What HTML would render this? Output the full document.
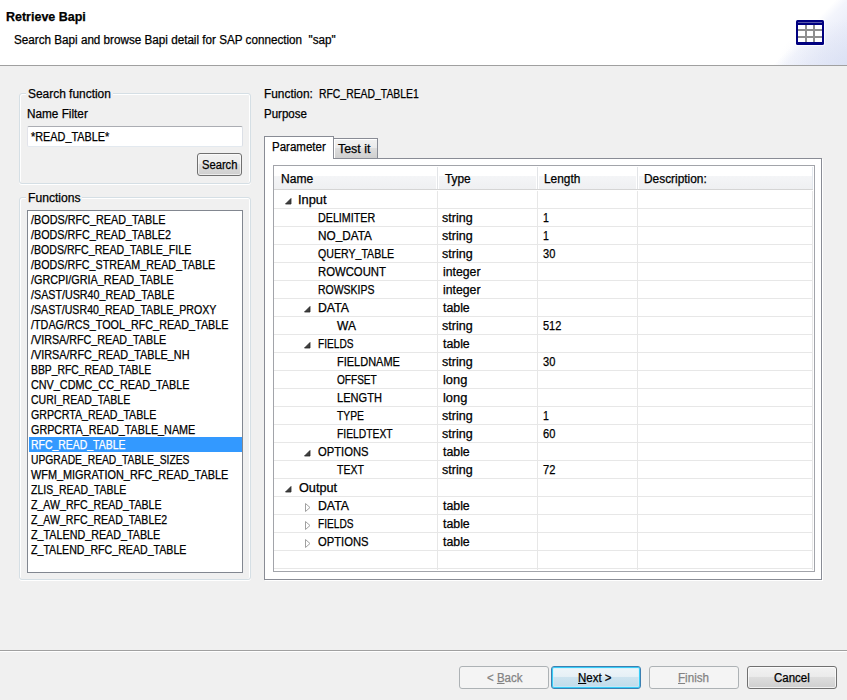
<!DOCTYPE html>
<html><head><meta charset="utf-8"><style>
html,body{margin:0;padding:0}
body{width:847px;height:700px;position:relative;overflow:hidden;background:#f0f0f0;font-family:"Liberation Sans",sans-serif;font-size:12px}
.t{position:absolute;white-space:pre;line-height:14px;transform-origin:0 0;font-size:12px;-webkit-text-stroke:0.25px currentColor}
u{text-decoration:underline;text-underline-offset:1px}
.us{position:relative;top:-1px}
</style></head><body>
<div style="position:absolute;left:0px;top:0px;width:847px;height:65px;background:#fff"></div>
<div style="position:absolute;left:600px;top:0px;width:247px;height:65px;background:radial-gradient(ellipse 70px 45px at 247px 65px, rgba(214,221,242,0.5) 0%, rgba(255,255,255,0) 100%), linear-gradient(134deg, rgba(255,255,255,0) 0%, rgba(255,255,255,0) 76%, #f3f5fc 80%, #eaedf9 88%, #e0e5f6 100%)"></div>
<div style="position:absolute;left:0px;top:65px;width:847px;height:1px;background:#a0a0a0"></div>
<div class="t" style="left:6.3px;top:10px;color:#000;font-weight:bold;transform:scaleX(1.0404);">Retrieve Bapi</div>
<div class="t" style="left:13.7px;top:33px;color:#000;transform:scaleX(0.9734);">Search Bapi and browse Bapi detail for SAP connection  &quot;sap&quot;</div>
<svg style="position:absolute;left:795px;top:19px" width="30" height="27" viewBox="0 0 30 27">
<rect x="0" y="0" width="30" height="27" rx="2" fill="#fff" opacity="0.8"/>
<rect x="1" y="1" width="28" height="25" rx="1.5" fill="#000080"/>
<rect x="3" y="6" width="24" height="17" fill="#fff"/>
<rect x="3" y="3" width="24" height="1" fill="#5a5aa8"/>
<rect x="10" y="6" width="2" height="17" fill="#8f8f8f"/>
<rect x="18" y="6" width="2" height="17" fill="#8f8f8f"/>
<rect x="3" y="10" width="24" height="2" fill="#8f8f8f"/>
<rect x="3" y="17" width="24" height="2" fill="#8f8f8f"/>
</svg>
<div style="position:absolute;left:19px;top:93px;width:232px;height:91px;box-sizing:border-box;border:1px solid #d5dfe5;border-radius:3px;box-shadow:inset 1px 1px 0 #fff, inset -1px 0 0 #fff, 0 1px 0 #fff;"></div>
<div style="position:absolute;left:26px;top:92px;width:87px;height:4px;background:#f0f0f0"></div>
<div class="t" style="left:27.7px;top:87px;color:#000;transform:scaleX(0.9940);">Search function</div>
<div class="t" style="left:27.3px;top:107px;color:#000;transform:scaleX(0.9806);">Name Filter</div>
<div style="position:absolute;left:27px;top:126px;width:216px;height:21px;box-sizing:border-box;background:#fff;border:1px solid #e3e9ef;border-top-color:#abadb3;border-left-color:#e2e3ea;border-right-color:#dbdfe6;border-radius:2px"></div>
<div class="t" style="left:31.1px;top:130px;color:#000;transform:scaleX(0.9052);">*READ<span class="us">_</span>TABLE*</div>
<div style="position:absolute;left:197px;top:153px;width:45px;height:23px;box-sizing:border-box;border:1px solid #707070;border-radius:3px;background:linear-gradient(#f2f2f2 0%,#ebebeb 45%,#dddddd 50%,#cfcfcf 100%);box-shadow:inset 0 0 0 1px rgba(255,255,255,0.6)"></div>
<div class="t" style="left:201.5px;top:158px;color:#000;transform:scaleX(0.9316);">Search</div>
<div style="position:absolute;left:19px;top:197px;width:232px;height:383px;box-sizing:border-box;border:1px solid #d5dfe5;border-radius:3px;box-shadow:inset 1px 1px 0 #fff, inset -1px 0 0 #fff, 0 1px 0 #fff;"></div>
<div style="position:absolute;left:26px;top:196px;width:56px;height:4px;background:#f0f0f0"></div>
<div class="t" style="left:27.8px;top:191px;color:#000;transform:scaleX(1.0115);">Functions</div>
<div style="position:absolute;left:27px;top:210px;width:216px;height:363px;box-sizing:border-box;background:#fff;border:1px solid #828790"></div>
<div class="t" style="left:30.7px;top:213px;color:#000;transform:scaleX(0.9015);">/BODS/RFC<span class="us">_</span>READ<span class="us">_</span>TABLE</div>
<div class="t" style="left:30.7px;top:228px;color:#000;transform:scaleX(0.8986);">/BODS/RFC<span class="us">_</span>READ<span class="us">_</span>TABLE2</div>
<div class="t" style="left:30.7px;top:243px;color:#000;transform:scaleX(0.8841);">/BODS/RFC<span class="us">_</span>READ<span class="us">_</span>TABLE<span class="us">_</span>FILE</div>
<div class="t" style="left:30.7px;top:258px;color:#000;transform:scaleX(0.8950);">/BODS/RFC<span class="us">_</span>STREAM<span class="us">_</span>READ<span class="us">_</span>TABLE</div>
<div class="t" style="left:30.7px;top:273px;color:#000;transform:scaleX(0.9030);">/GRCPI/GRIA<span class="us">_</span>READ<span class="us">_</span>TABLE</div>
<div class="t" style="left:30.7px;top:288px;color:#000;transform:scaleX(0.8935);">/SAST/USR40<span class="us">_</span>READ<span class="us">_</span>TABLE</div>
<div class="t" style="left:30.7px;top:303px;color:#000;transform:scaleX(0.8862);">/SAST/USR40<span class="us">_</span>READ<span class="us">_</span>TABLE<span class="us">_</span>PROXY</div>
<div class="t" style="left:30.7px;top:318px;color:#000;transform:scaleX(0.8989);">/TDAG/RCS<span class="us">_</span>TOOL<span class="us">_</span>RFC<span class="us">_</span>READ<span class="us">_</span>TABLE</div>
<div class="t" style="left:30.7px;top:333px;color:#000;transform:scaleX(0.8948);">/VIRSA/RFC<span class="us">_</span>READ<span class="us">_</span>TABLE</div>
<div class="t" style="left:30.7px;top:348px;color:#000;transform:scaleX(0.9047);">/VIRSA/RFC<span class="us">_</span>READ<span class="us">_</span>TABLE<span class="us">_</span>NH</div>
<div class="t" style="left:30.8px;top:363px;color:#000;transform:scaleX(0.8628);">BBP<span class="us">_</span>RFC<span class="us">_</span>READ<span class="us">_</span>TABLE</div>
<div class="t" style="left:30.8px;top:378px;color:#000;transform:scaleX(0.9010);">CNV<span class="us">_</span>CDMC<span class="us">_</span>CC<span class="us">_</span>READ<span class="us">_</span>TABLE</div>
<div class="t" style="left:30.8px;top:393px;color:#000;transform:scaleX(0.8762);">CURI<span class="us">_</span>READ<span class="us">_</span>TABLE</div>
<div class="t" style="left:30.8px;top:408px;color:#000;transform:scaleX(0.8861);">GRPCRTA<span class="us">_</span>READ<span class="us">_</span>TABLE</div>
<div class="t" style="left:30.8px;top:423px;color:#000;transform:scaleX(0.8987);">GRPCRTA<span class="us">_</span>READ<span class="us">_</span>TABLE<span class="us">_</span>NAME</div>
<div style="position:absolute;left:29px;top:437px;width:213px;height:15px;background:#3399ff"></div>
<div class="t" style="left:30.8px;top:438px;color:#fff;transform:scaleX(0.8700);">RFC<span class="us">_</span>READ<span class="us">_</span>TABLE</div>
<div class="t" style="left:30.8px;top:453px;color:#000;transform:scaleX(0.8585);">UPGRADE<span class="us">_</span>READ<span class="us">_</span>TABLE<span class="us">_</span>SIZES</div>
<div class="t" style="left:30.8px;top:468px;color:#000;transform:scaleX(0.9062);">WFM<span class="us">_</span>MIGRATION<span class="us">_</span>RFC<span class="us">_</span>READ<span class="us">_</span>TABLE</div>
<div class="t" style="left:30.8px;top:483px;color:#000;transform:scaleX(0.8727);">ZLIS<span class="us">_</span>READ<span class="us">_</span>TABLE</div>
<div class="t" style="left:30.8px;top:498px;color:#000;transform:scaleX(0.8811);">Z<span class="us">_</span>AW<span class="us">_</span>RFC<span class="us">_</span>READ<span class="us">_</span>TABLE</div>
<div class="t" style="left:30.8px;top:513px;color:#000;transform:scaleX(0.8798);">Z<span class="us">_</span>AW<span class="us">_</span>RFC<span class="us">_</span>READ<span class="us">_</span>TABLE2</div>
<div class="t" style="left:30.8px;top:528px;color:#000;transform:scaleX(0.8954);">Z<span class="us">_</span>TALEND<span class="us">_</span>READ<span class="us">_</span>TABLE</div>
<div class="t" style="left:30.8px;top:543px;color:#000;transform:scaleX(0.8844);">Z<span class="us">_</span>TALEND<span class="us">_</span>RFC<span class="us">_</span>READ<span class="us">_</span>TABLE</div>
<div class="t" style="left:264.2px;top:87px;color:#000;transform:scaleX(0.9899);">Function:</div>
<div class="t" style="left:319.0px;top:87px;color:#000;transform:scaleX(0.8662);">RFC<span class="us">_</span>READ<span class="us">_</span>TABLE1</div>
<div class="t" style="left:264.2px;top:107px;color:#000;transform:scaleX(0.9597);">Purpose</div>
<div style="position:absolute;left:264px;top:158px;width:558px;height:422px;box-sizing:border-box;background:#fff;border:1px solid #898c95;box-shadow:1px 1px 0 #fff"></div>
<div style="position:absolute;left:333px;top:138px;width:45px;height:20px;box-sizing:border-box;border:1px solid #898c95;border-bottom:none;background:linear-gradient(#f2f2f2 0%,#ebebeb 45%,#dddddd 50%,#cfcfcf 100%);box-shadow:inset 1px 1px 0 #fff"></div>
<div style="position:absolute;left:264px;top:136px;width:70px;height:23px;box-sizing:border-box;border:1px solid #898c95;border-bottom:none;background:#fff"></div>
<div class="t" style="left:272.1px;top:140px;color:#000;transform:scaleX(0.9607);">Parameter</div>
<div class="t" style="left:338.1px;top:142px;color:#000;transform:scaleX(1.0319);">Test it</div>
<div style="position:absolute;left:273px;top:165px;width:542px;height:407px;box-sizing:border-box;background:#fff;border:1px solid #a2a4aa"></div>
<div style="position:absolute;left:274px;top:166px;width:538px;height:23px;background:linear-gradient(#ffffff 0%,#ffffff 43.4%,#f4f5f7 43.5%,#eff0f2 100%)"></div>
<div style="position:absolute;left:274px;top:189px;width:539px;height:1px;background:#d5d5d5"></div>
<div style="position:absolute;left:812px;top:167px;width:1px;height:22px;background:#e3e8ee"></div>
<div style="position:absolute;left:437px;top:167px;width:1px;height:22px;background:#e2e4e7"></div>
<div style="position:absolute;left:436px;top:167px;width:1px;height:22px;background:#fff"></div>
<div style="position:absolute;left:438px;top:167px;width:1px;height:22px;background:#fff"></div>
<div style="position:absolute;left:537px;top:167px;width:1px;height:22px;background:#e2e4e7"></div>
<div style="position:absolute;left:536px;top:167px;width:1px;height:22px;background:#fff"></div>
<div style="position:absolute;left:538px;top:167px;width:1px;height:22px;background:#fff"></div>
<div style="position:absolute;left:637px;top:167px;width:1px;height:22px;background:#e2e4e7"></div>
<div style="position:absolute;left:636px;top:167px;width:1px;height:22px;background:#fff"></div>
<div style="position:absolute;left:638px;top:167px;width:1px;height:22px;background:#fff"></div>
<div class="t" style="left:281.1px;top:172px;color:#000;transform:scaleX(1.0031);">Name</div>
<div class="t" style="left:444.5px;top:172px;color:#000;transform:scaleX(0.9885);">Type</div>
<div class="t" style="left:544.2px;top:172px;color:#000;transform:scaleX(0.9891);">Length</div>
<div class="t" style="left:644.1px;top:172px;color:#000;transform:scaleX(0.9905);">Description:</div>
<div style="position:absolute;left:274px;top:208px;width:539px;height:1px;background:#e7e7e7"></div>
<div style="position:absolute;left:274px;top:226px;width:539px;height:1px;background:#e7e7e7"></div>
<div style="position:absolute;left:274px;top:244px;width:539px;height:1px;background:#e7e7e7"></div>
<div style="position:absolute;left:274px;top:262px;width:539px;height:1px;background:#e7e7e7"></div>
<div style="position:absolute;left:274px;top:280px;width:539px;height:1px;background:#e7e7e7"></div>
<div style="position:absolute;left:274px;top:298px;width:539px;height:1px;background:#e7e7e7"></div>
<div style="position:absolute;left:274px;top:316px;width:539px;height:1px;background:#e7e7e7"></div>
<div style="position:absolute;left:274px;top:334px;width:539px;height:1px;background:#e7e7e7"></div>
<div style="position:absolute;left:274px;top:352px;width:539px;height:1px;background:#e7e7e7"></div>
<div style="position:absolute;left:274px;top:370px;width:539px;height:1px;background:#e7e7e7"></div>
<div style="position:absolute;left:274px;top:388px;width:539px;height:1px;background:#e7e7e7"></div>
<div style="position:absolute;left:274px;top:406px;width:539px;height:1px;background:#e7e7e7"></div>
<div style="position:absolute;left:274px;top:424px;width:539px;height:1px;background:#e7e7e7"></div>
<div style="position:absolute;left:274px;top:442px;width:539px;height:1px;background:#e7e7e7"></div>
<div style="position:absolute;left:274px;top:460px;width:539px;height:1px;background:#e7e7e7"></div>
<div style="position:absolute;left:274px;top:478px;width:539px;height:1px;background:#e7e7e7"></div>
<div style="position:absolute;left:274px;top:496px;width:539px;height:1px;background:#e7e7e7"></div>
<div style="position:absolute;left:274px;top:514px;width:539px;height:1px;background:#e7e7e7"></div>
<div style="position:absolute;left:274px;top:532px;width:539px;height:1px;background:#e7e7e7"></div>
<div style="position:absolute;left:274px;top:550px;width:539px;height:1px;background:#e7e7e7"></div>
<div style="position:absolute;left:274px;top:568px;width:539px;height:1px;background:#e7e7e7"></div>
<div style="position:absolute;left:437px;top:191px;width:1px;height:379px;background:#e7e7e7"></div>
<div style="position:absolute;left:537px;top:191px;width:1px;height:379px;background:#e7e7e7"></div>
<div style="position:absolute;left:637px;top:191px;width:1px;height:379px;background:#e7e7e7"></div>
<div style="position:absolute;left:812px;top:191px;width:1px;height:379px;background:#e7e7e7"></div>
<svg style="position:absolute;left:285px;top:198px" width="7" height="7" viewBox="0 0 7 7"><path d="M6 0.5 L6 6 L0.5 6 Z" fill="#404040" stroke="#262626" stroke-width="0.8" stroke-linejoin="round"/></svg>
<div class="t" style="left:298.4px;top:193px;color:#000;transform:scaleX(1.0712);">Input</div>
<div class="t" style="left:317.9px;top:211px;color:#000;transform:scaleX(0.8938);">DELIMITER</div>
<div class="t" style="left:442.4px;top:211px;color:#000;transform:scaleX(1.0444);">string</div>
<div class="t" style="left:542.5px;top:211px;color:#000;transform:scaleX(0.8806);">1</div>
<div class="t" style="left:317.9px;top:229px;color:#000;transform:scaleX(0.9818);">NO<span class="us">_</span>DATA</div>
<div class="t" style="left:442.4px;top:229px;color:#000;transform:scaleX(1.0444);">string</div>
<div class="t" style="left:542.5px;top:229px;color:#000;transform:scaleX(0.8806);">1</div>
<div class="t" style="left:317.9px;top:247px;color:#000;transform:scaleX(0.8830);">QUERY<span class="us">_</span>TABLE</div>
<div class="t" style="left:442.4px;top:247px;color:#000;transform:scaleX(1.0444);">string</div>
<div class="t" style="left:542.5px;top:247px;color:#000;transform:scaleX(0.9248);">30</div>
<div class="t" style="left:317.9px;top:265px;color:#000;transform:scaleX(0.9431);">ROWCOUNT</div>
<div class="t" style="left:442.9px;top:265px;color:#000;transform:scaleX(1.0218);">integer</div>
<div class="t" style="left:317.9px;top:283px;color:#000;transform:scaleX(0.8733);">ROWSKIPS</div>
<div class="t" style="left:442.9px;top:283px;color:#000;transform:scaleX(1.0218);">integer</div>
<svg style="position:absolute;left:304px;top:306px" width="7" height="7" viewBox="0 0 7 7"><path d="M6 0.5 L6 6 L0.5 6 Z" fill="#404040" stroke="#262626" stroke-width="0.8" stroke-linejoin="round"/></svg>
<div class="t" style="left:317.9px;top:301px;color:#000;transform:scaleX(1.0232);">DATA</div>
<div class="t" style="left:442.7px;top:301px;color:#000;transform:scaleX(1.0269);">table</div>
<div class="t" style="left:337.1px;top:319px;color:#000;transform:scaleX(1.0000);">WA</div>
<div class="t" style="left:442.4px;top:319px;color:#000;transform:scaleX(1.0444);">string</div>
<div class="t" style="left:542.5px;top:319px;color:#000;transform:scaleX(0.9150);">512</div>
<svg style="position:absolute;left:304px;top:342px" width="7" height="7" viewBox="0 0 7 7"><path d="M6 0.5 L6 6 L0.5 6 Z" fill="#404040" stroke="#262626" stroke-width="0.8" stroke-linejoin="round"/></svg>
<div class="t" style="left:317.9px;top:337px;color:#000;transform:scaleX(0.8452);">FIELDS</div>
<div class="t" style="left:442.7px;top:337px;color:#000;transform:scaleX(1.0269);">table</div>
<div class="t" style="left:337.1px;top:355px;color:#000;transform:scaleX(0.9156);">FIELDNAME</div>
<div class="t" style="left:442.4px;top:355px;color:#000;transform:scaleX(1.0444);">string</div>
<div class="t" style="left:542.5px;top:355px;color:#000;transform:scaleX(0.9248);">30</div>
<div class="t" style="left:337.1px;top:373px;color:#000;transform:scaleX(0.8393);">OFFSET</div>
<div class="t" style="left:442.7px;top:373px;color:#000;transform:scaleX(1.0705);">long</div>
<div class="t" style="left:337.1px;top:391px;color:#000;transform:scaleX(0.9220);">LENGTH</div>
<div class="t" style="left:442.7px;top:391px;color:#000;transform:scaleX(1.0705);">long</div>
<div class="t" style="left:337.1px;top:409px;color:#000;transform:scaleX(0.8594);">TYPE</div>
<div class="t" style="left:442.4px;top:409px;color:#000;transform:scaleX(1.0444);">string</div>
<div class="t" style="left:542.5px;top:409px;color:#000;transform:scaleX(0.8806);">1</div>
<div class="t" style="left:337.1px;top:427px;color:#000;transform:scaleX(0.8609);">FIELDTEXT</div>
<div class="t" style="left:442.4px;top:427px;color:#000;transform:scaleX(1.0444);">string</div>
<div class="t" style="left:542.5px;top:427px;color:#000;transform:scaleX(0.9248);">60</div>
<svg style="position:absolute;left:304px;top:450px" width="7" height="7" viewBox="0 0 7 7"><path d="M6 0.5 L6 6 L0.5 6 Z" fill="#404040" stroke="#262626" stroke-width="0.8" stroke-linejoin="round"/></svg>
<div class="t" style="left:317.9px;top:445px;color:#000;transform:scaleX(0.9352);">OPTIONS</div>
<div class="t" style="left:442.7px;top:445px;color:#000;transform:scaleX(1.0269);">table</div>
<div class="t" style="left:337.1px;top:463px;color:#000;transform:scaleX(0.8762);">TEXT</div>
<div class="t" style="left:442.4px;top:463px;color:#000;transform:scaleX(1.0444);">string</div>
<div class="t" style="left:542.5px;top:463px;color:#000;transform:scaleX(0.9248);">72</div>
<svg style="position:absolute;left:285px;top:486px" width="7" height="7" viewBox="0 0 7 7"><path d="M6 0.5 L6 6 L0.5 6 Z" fill="#404040" stroke="#262626" stroke-width="0.8" stroke-linejoin="round"/></svg>
<div class="t" style="left:299.0px;top:481px;color:#000;transform:scaleX(1.0556);">Output</div>
<svg style="position:absolute;left:305px;top:503px" width="6" height="9" viewBox="0 0 6 9"><path d="M0.5 0.5 L5 4.5 L0.5 8.5 Z" fill="#fff" stroke="#a0a0a0" stroke-width="1"/></svg>
<div class="t" style="left:317.9px;top:499px;color:#000;transform:scaleX(1.0232);">DATA</div>
<div class="t" style="left:442.7px;top:499px;color:#000;transform:scaleX(1.0269);">table</div>
<svg style="position:absolute;left:305px;top:521px" width="6" height="9" viewBox="0 0 6 9"><path d="M0.5 0.5 L5 4.5 L0.5 8.5 Z" fill="#fff" stroke="#a0a0a0" stroke-width="1"/></svg>
<div class="t" style="left:317.9px;top:517px;color:#000;transform:scaleX(0.8452);">FIELDS</div>
<div class="t" style="left:442.7px;top:517px;color:#000;transform:scaleX(1.0269);">table</div>
<svg style="position:absolute;left:305px;top:539px" width="6" height="9" viewBox="0 0 6 9"><path d="M0.5 0.5 L5 4.5 L0.5 8.5 Z" fill="#fff" stroke="#a0a0a0" stroke-width="1"/></svg>
<div class="t" style="left:317.9px;top:535px;color:#000;transform:scaleX(0.9352);">OPTIONS</div>
<div class="t" style="left:442.7px;top:535px;color:#000;transform:scaleX(1.0269);">table</div>
<div style="position:absolute;left:0px;top:650px;width:847px;height:1px;background:#a0a0a0"></div>
<div style="position:absolute;left:0px;top:651px;width:847px;height:1px;background:#fff"></div>
<div style="position:absolute;left:459px;top:666px;width:90px;height:23px;box-sizing:border-box;border-radius:3px;border:1px solid #adb2b5;background:#f4f4f4;"></div>
<div class="t" style="left:486.8px;top:671px;color:#838383;transform:scaleX(0.9569);">&lt; <u>B</u>ack</div>
<div style="position:absolute;left:551px;top:666px;width:90px;height:23px;box-sizing:border-box;border-radius:3px;border:1px solid #3c7fb1;background:linear-gradient(#eef5f9 0%,#e6f0f6 45%,#cde3ef 50%,#c0dbea 100%);box-shadow:inset 0 0 0 1px #38cdf7, inset 0 0 0 2px rgba(200,240,255,0.5);"></div>
<div class="t" style="left:577.8px;top:671px;color:#000;transform:scaleX(0.9571);"><u>N</u>ext &gt;</div>
<div style="position:absolute;left:649px;top:666px;width:90px;height:23px;box-sizing:border-box;border-radius:3px;border:1px solid #adb2b5;background:#f4f4f4;"></div>
<div class="t" style="left:677.9px;top:671px;color:#838383;transform:scaleX(0.9688);"><u>F</u>inish</div>
<div style="position:absolute;left:747px;top:666px;width:90px;height:23px;box-sizing:border-box;border-radius:3px;border:1px solid #707070;background:linear-gradient(#f2f2f2 0%,#ebebeb 45%,#dddddd 50%,#cfcfcf 100%);box-shadow:inset 0 0 0 1px rgba(255,255,255,0.7);"></div>
<div class="t" style="left:774.0px;top:671px;color:#000;transform:scaleX(0.9572);">Cancel</div>
</body></html>
